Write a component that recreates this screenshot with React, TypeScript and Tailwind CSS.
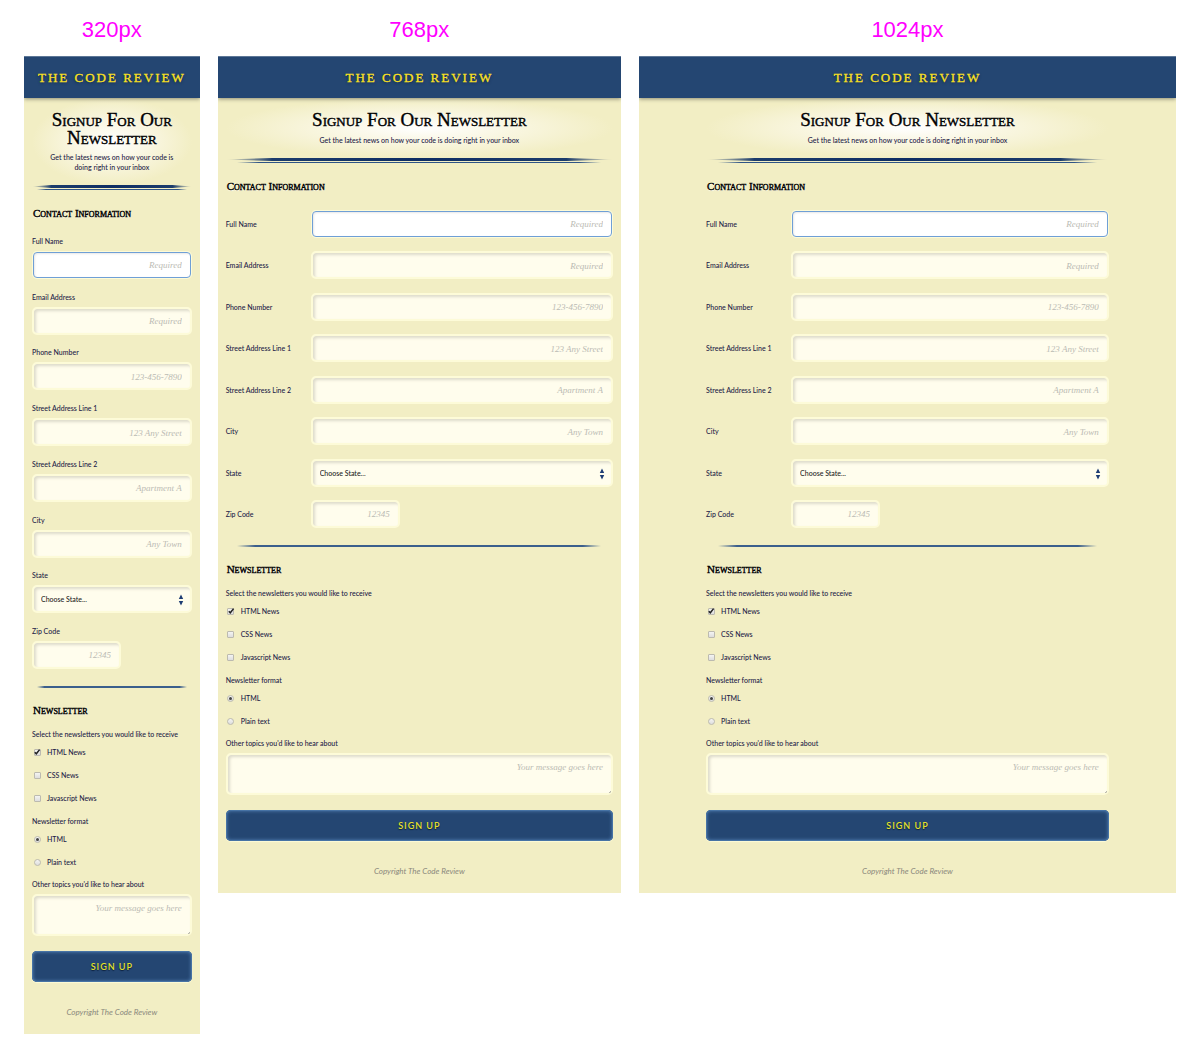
import { useId } from "react";

const SANS = "font-['Lato','Noto_Sans',sans-serif]";
const SERIF = "font-['Liberation_Serif',serif]";

const FIELD =
  "w-full rounded-[5px] border-2 border-[#fdfbd8] bg-[#fffded] shadow-[inset_2px_2px_3px_#dedbcb]";
const PLACEHOLDER =
  "text-right placeholder:font-['Liberation_Serif',serif] placeholder:text-[9px] placeholder:italic placeholder:text-[#bbbbb4]";

type Field = {
  name: string;
  label: string;
  placeholder?: string;
  kind?: "select" | "short" | "active";
};

const FIELDS: Field[] = [
  { name: "name", label: "Full Name", placeholder: "Required", kind: "active" },
  { name: "email", label: "Email Address", placeholder: "Required" },
  { name: "phone", label: "Phone Number", placeholder: "123-456-7890" },
  { name: "street1", label: "Street Address Line 1", placeholder: "123 Any Street" },
  { name: "street2", label: "Street Address Line 2", placeholder: "Apartment A" },
  { name: "city", label: "City", placeholder: "Any Town" },
  { name: "state", label: "State", kind: "select" },
  { name: "zip", label: "Zip Code", placeholder: "12345", kind: "short" },
];

function Control({ id, field }: { id: string; field: Field }) {
  if (field.kind === "select") {
    return (
      <div className="relative">
        <select
          id={id}
          name={field.name}
          className={`block h-7 appearance-none px-[7px] text-[7px] font-medium text-[#1c1c1c] ${FIELD}`}
        >
          <option>Choose State...</option>
        </select>
        <svg
          viewBox="0 0 6 12"
          className="pointer-events-none absolute top-[9px] right-2 h-3 w-[6px]"
          fill="#1d3c74"
          aria-hidden="true"
        >
          <path d="M3 0.5 5.2 5H.8zM3 11.5 5.2 7H.8z" />
        </svg>
      </div>
    );
  }
  if (field.kind === "active") {
    return (
      <div className="rounded-[5px] bg-[#fdfbd8] p-px">
        <input
          id={id}
          name={field.name}
          placeholder={field.placeholder}
          className={`block h-[26px] w-full rounded-[4px] border border-[#6f9fd6] bg-white px-2 pb-px text-[9px] shadow-[inset_1px_1px_2px_#e8e8e8] ${PLACEHOLDER}`}
        />
      </div>
    );
  }
  return (
    <div className={field.kind === "short" ? "w-[89px]" : "w-full"}>
      <input
        id={id}
        name={field.name}
        placeholder={field.placeholder}
        className={`block h-7 px-2 text-[9px] ${FIELD} ${PLACEHOLDER}`}
      />
    </div>
  );
}

function Option({
  type,
  name,
  label,
  checked,
}: {
  type: "checkbox" | "radio";
  name: string;
  label: string;
  checked?: boolean;
}) {
  return (
    <label className="flex items-center gap-[6px] pl-px">
      <span className="grid size-2 place-items-center *:col-start-1 *:row-start-1">
        <input
          type={type}
          name={name}
          defaultChecked={checked}
          className="peer size-[7px] appearance-none rounded-[1px] border border-[#bcbab0] bg-linear-to-b from-[#f4f4f2] to-[#dedede] [&[type=radio]]:rounded-full"
        />
        {type === "checkbox" ? (
          <svg
            viewBox="0 0 8 8"
            className="pointer-events-none hidden size-2 peer-checked:block"
            fill="none"
            stroke="#222"
            strokeWidth="1.5"
            aria-hidden="true"
          >
            <path d="M1.8 4.2 3.3 5.8 6.6 1.6" />
          </svg>
        ) : (
          <span className="pointer-events-none hidden size-[3px] rounded-full bg-[#444] peer-checked:block" />
        )}
      </span>
      <span>{label}</span>
    </label>
  );
}

function SectionTitle({ children }: { children: string }) {
  return (
    <h2
      className={`px-px text-[11px] leading-4 font-normal text-black [-webkit-text-stroke:0.4px_black] [font-variant-caps:small-caps] [text-shadow:0_1px_1px_white] ${SERIF}`}
    >
      {children}
    </h2>
  );
}

function SignupPage() {
  const uid = useId();
  return (
    <div
      className={`@container overflow-hidden bg-[#f2eec4] text-[7px] leading-[10px] font-medium text-[#1b2047] ${SANS}`}
    >
      <header className="relative flex h-[42px] items-center justify-center border-t border-[#5d7797] bg-[#244672] shadow-[0_1px_4px_#8d8b72]">
        <span
          className={`text-[13px] tracking-[2px] whitespace-nowrap text-[#fbe122] [-webkit-text-stroke:0.3px_#fbe122] [text-shadow:0_1px_3px_#0b1f3d] ${SERIF}`}
        >
          THE CODE REVIEW
        </span>
      </header>

      <main className="mx-auto px-2 @lg:w-3/4 @lg:px-0">
        <div className="flex flex-col items-center gap-[5px] bg-[radial-gradient(closest-side,#ffffff,#f9f6e0_50%,#f2eec4)] px-3 pt-[13px] pb-[13px] text-center @xs:gap-[6px]">
          <h1
            className={`text-[19px] leading-[18px] font-normal text-black [-webkit-text-stroke:0.4px_black] [font-variant-caps:small-caps] [text-shadow:0_1px_2px_white] ${SERIF}`}
          >
            Signup For Our Newsletter
          </h1>
          <p>Get the latest news on how your code is doing right in your inbox</p>
        </div>
        <div className="h-[3px] bg-[linear-gradient(to_right,transparent,#1c3c6c_12%,#0e2d63_50%,#1c3c6c_88%,transparent)] [clip-path:polygon(0_50%,12%_0,88%_0,100%_50%,88%_100%,12%_100%)]" />
        <div className="mx-[3%] mt-px h-px bg-[linear-gradient(to_right,transparent,#2f5486_6%,#2f5486_94%,transparent)]" />

        <form onSubmit={(e) => e.preventDefault()} className="flex flex-col">
          <div className="mt-[15px]">
            <SectionTitle>Contact Information</SectionTitle>
          </div>
          <div className="mt-[15px] grid min-h-[433px] content-between @xs:mt-4 @xs:min-h-[318px]">
            {FIELDS.map((field) => (
              <div
                key={field.name}
                className="grid items-center gap-y-[5px] @xs:grid-cols-[85px_1fr]"
              >
                <label htmlFor={`${uid}-${field.name}`}>{field.label}</label>
                <Control id={`${uid}-${field.name}`} field={field} />
              </div>
            ))}
          </div>

          <div className="mx-[3%] mt-[17px] h-[2px] bg-[linear-gradient(to_right,transparent,#3c5f8c_5%,#3c5f8c_95%,transparent)]" />

          <div className="mt-[14px]">
            <SectionTitle>Newsletter</SectionTitle>
          </div>
          <fieldset className="mt-[11px] flex flex-col gap-y-[13px]">
            <legend className="mb-2">Select the newsletters you would like to receive</legend>
            <Option type="checkbox" name="html-news" label="HTML News" checked />
            <Option type="checkbox" name="css-news" label="CSS News" />
            <Option type="checkbox" name="js-news" label="Javascript News" />
          </fieldset>
          <fieldset className="mt-[13px] flex flex-col gap-y-[13px]">
            <legend className="mb-2">Newsletter format</legend>
            <Option type="radio" name={`${uid}-format`} label="HTML" checked />
            <Option type="radio" name={`${uid}-format`} label="Plain text" />
          </fieldset>

          <label htmlFor={`${uid}-topics`} className="mt-3 mb-[5px]">
            Other topics you'd like to hear about
          </label>
          <div className="relative">
            <textarea
              id={`${uid}-topics`}
              placeholder="Your message goes here"
              className={`block h-[42px] resize-none px-2 py-[6px] text-[9px] leading-[12px] ${FIELD} ${PLACEHOLDER}`}
            />
            <svg
              viewBox="0 0 4 4"
              className="pointer-events-none absolute right-[2px] bottom-[2px] size-[2px]"
              stroke="#777"
              aria-hidden="true"
            >
              <path d="M0 4 4 0M2.5 4 4 2.5" />
            </svg>
          </div>

          <button
            type="submit"
            className="mt-[15px] h-[31px] rounded-[5px] bg-[#244672] text-[9px] font-semibold tracking-[1px] text-[#e6e22a] shadow-[inset_0_0_1px_1px_#4a76a8,inset_0_0_3px_2px_#3e6797,0_1px_1px_#fdfbd8] [text-shadow:0_1px_1px_#0b1f3d]"
          >
            SIGN UP
          </button>
        </form>
      </main>

      <footer className="pt-[25px] pb-[17px] text-center text-[8px] font-normal text-[#8a887c] italic">
        Copyright The Code Review
      </footer>
    </div>
  );
}

const WIDTHS = ["320px", "768px", "1024px"];

export default function App() {
  return (
    <div className="grid min-h-screen grid-cols-[176fr_404fr_538fr] items-start gap-x-[18px] bg-white pt-4 pr-6 pb-6 pl-6">
      {WIDTHS.map((width) => (
        <section key={width} className="min-w-0">
          <h2 className="mb-3 text-center font-['Liberation_Sans',sans-serif] text-[22px] leading-7 text-[#ff00ff]">
            {width}
          </h2>
          <SignupPage />
        </section>
      ))}
    </div>
  );
}
